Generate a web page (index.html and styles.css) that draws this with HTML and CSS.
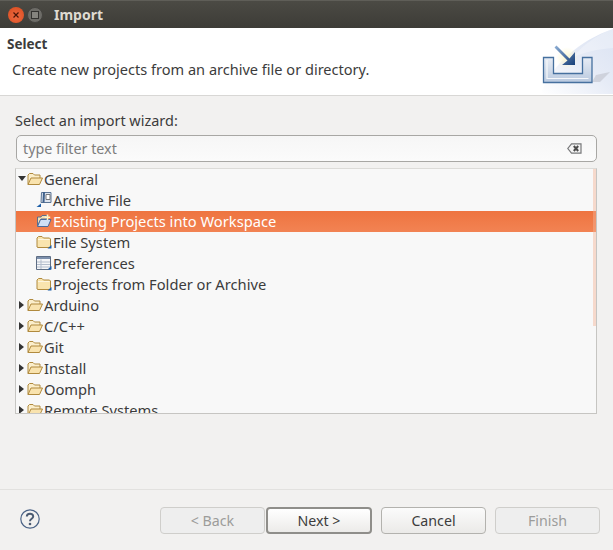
FILE: index.html
```html
<!DOCTYPE html>
<html lang="en">
<head>
  <meta charset="UTF-8" />
  <meta name="viewport" content="width=device-width, initial-scale=1.0" />
  <title>Import</title>
  <link rel="stylesheet" href="styles.css">
</head>
<body>
  <div class="titlebar">
    <span class="win-btn win-close">
      <svg width="8" height="8" viewBox="0 0 8 8"><path d="M1.5 1.5 6.5 6.5M6.5 1.5 1.5 6.5" stroke="#4a1507" stroke-width="1.2"/></svg>
    </span>
    <span class="win-btn win-max"><span class="win-max-box"></span></span>
    <span class="win-title">Import</span>
  </div>

  <div class="banner">
    <div class="banner-text">
      <div class="banner-head">Select</div>
      <div class="banner-desc">Create new projects from an archive file or directory.</div>
    </div>
    <svg class="banner-art" width="113" height="67" viewBox="0 0 113 67">
      <defs>
        <linearGradient id="sky" x1="0" y1="1" x2="1" y2="0">
          <stop offset="0" stop-color="#ffffff"/>
          <stop offset="0.55" stop-color="#e6ebf6"/>
          <stop offset="1" stop-color="#dbe3f3"/>
        </linearGradient>
        <linearGradient id="tray" x1="0" y1="0" x2="0" y2="1">
          <stop offset="0" stop-color="#e8edf5"/>
          <stop offset="1" stop-color="#b9c9df"/>
        </linearGradient>
        <linearGradient id="arrow" x1="0" y1="0" x2="1" y2="1">
          <stop offset="0" stop-color="#8fb0d6"/>
          <stop offset="1" stop-color="#173f78"/>
        </linearGradient>
        <radialGradient id="glow">
          <stop offset="0" stop-color="#fdf7cf"/>
          <stop offset="1" stop-color="#fdf7cf" stop-opacity="0"/>
        </radialGradient>
      </defs>
      <path d="M41 66C50 38 80 12 113 1V66Z" fill="url(#sky)"/>
      <path d="M72 30C84 24 98 21 113 20V1C98 6 84 16 72 30Z" fill="#ffffff" opacity="0.3"/>
      <path d="M92 54H100L110 44 96 47Z" fill="#c4c8d2" opacity="0.7"/>
      <circle cx="67" cy="30" r="11" fill="url(#glow)"/>
      <path d="M43.5 29.5H53.5V45.5H82.5V29.5H92V54.5H43.5Z" fill="url(#tray)" stroke="#46709f" stroke-width="1.3"/>
      <path d="M47 32V50.5H88.5" fill="none" stroke="#f6f8fb" stroke-width="1.2"/>
      <path d="M54.5 19.5 56.5 17.5 69.5 30.5 75 24V37H62L67.5 32.5Z" fill="url(#arrow)"/>
    </svg>
  </div>

  <div class="content">
    <label class="filter-label">Select an import wizard:</label>
    <div class="filter">
      <span class="filter-hint">type filter text</span>
      <svg width="15" height="11" viewBox="0 0 15 11"><path d="M4.5 .8H14V10.2H4.5L.8 5.5Z" fill="#f4f4f4" stroke="#77787a" stroke-width="1.2"/><path d="M6.8 3 11.2 8M11.2 3 6.8 8" stroke="#4c4c4c" stroke-width="2"/></svg>
    </div>

    <div class="tree">
      <div class="row">
        <span class="twist twist-open"></span>
        <svg class="ico" width="16" height="14" viewBox="0 0 16 14"><use href="#open-folder"/></svg>
        <span>General</span>
      </div>
      <div class="row row-child">
        <svg class="ico" width="16" height="17" viewBox="0 0 16 17">
          <path d="M5.5 1.5H15V11.5H5Z" fill="#dde4ee" stroke="#5b7595"/>
          <path d="M8 1 7.5 11.5" stroke="#3f618c" stroke-width="2"/>
          <path d="M10 3.5H14V8.5H10Z" fill="#fff" stroke="#77797c"/>
          <path d="M5 12.5V16H.5Z" fill="#1d5fa8"/>
        </svg>
        <span>Archive File</span>
      </div>
      <div class="row row-child row-selected">
        <svg class="ico" width="16" height="14" viewBox="0 0 16 14">
          <path d="M1.5 12V3H5L6 1.5H11V5H5L1.5 12Z" fill="#f3dfb0" stroke="#5c6d8c"/>
          <path d="M1.5 12.5 4.5 5.5H15L12 12.5Z" fill="#cfdff5" stroke="#4a6a9c"/>
          <path d="M11.5 .5V6M8.8 3.2H14.2" stroke="#fff3c4" stroke-width="1.6"/>
        </svg>
        <span>Existing Projects into Workspace</span>
      </div>
      <div class="row row-child">
        <svg class="ico" width="16" height="14" viewBox="0 0 16 14"><use href="#closed-folder"/></svg>
        <span>File System</span>
      </div>
      <div class="row row-child">
        <svg class="ico" width="16" height="14" viewBox="0 0 16 14">
          <path d="M.5 .5H14.5V13.5H.5Z" fill="#f5f6f8" stroke="#5d6d84"/>
          <path d="M1 1H14V3H1Z" fill="#7d90ac"/>
          <path d="M5 3.5V13M1 6H14M1 8.5H14M1 11H14" stroke="#b3bdcc"/>
          <path d="M15.5 10V13.5H11.5Z" fill="#1d5fa8"/>
        </svg>
        <span>Preferences</span>
      </div>
      <div class="row row-child">
        <svg class="ico" width="16" height="14" viewBox="0 0 16 14"><use href="#closed-folder"/></svg>
        <span>Projects from Folder or Archive</span>
      </div>
      <div class="row">
        <span class="twist"></span>
        <svg class="ico" width="16" height="14" viewBox="0 0 16 14"><use href="#open-folder"/></svg>
        <span>Arduino</span>
      </div>
      <div class="row">
        <span class="twist"></span>
        <svg class="ico" width="16" height="14" viewBox="0 0 16 14"><use href="#open-folder"/></svg>
        <span>C/C++</span>
      </div>
      <div class="row">
        <span class="twist"></span>
        <svg class="ico" width="16" height="14" viewBox="0 0 16 14"><use href="#open-folder"/></svg>
        <span>Git</span>
      </div>
      <div class="row">
        <span class="twist"></span>
        <svg class="ico" width="16" height="14" viewBox="0 0 16 14"><use href="#open-folder"/></svg>
        <span>Install</span>
      </div>
      <div class="row">
        <span class="twist"></span>
        <svg class="ico" width="16" height="14" viewBox="0 0 16 14"><use href="#open-folder"/></svg>
        <span>Oomph</span>
      </div>
      <div class="row">
        <span class="twist"></span>
        <svg class="ico" width="16" height="14" viewBox="0 0 16 14"><use href="#open-folder"/></svg>
        <span>Remote Systems</span>
      </div>
      <div class="scroll-thumb"></div>
    </div>
  </div>

  <div class="footer">
    <svg class="help" width="20" height="20" viewBox="0 0 20 20">
      <circle cx="10" cy="10" r="9.2" fill="none" stroke="#4b6386" stroke-width="1.2"/>
      <path d="M6.8 7.6C6.8 3.8 13.2 3.8 13.2 7.4 13.2 9.8 10 9.6 10 12.2" fill="none" stroke="#4b5b72" stroke-width="2"/>
      <circle cx="10" cy="15" r="1.3" fill="#4b5b72"/>
    </svg>
    <div class="buttons">
      <div class="wizard-nav">
        <button class="btn" disabled>&lt; Back</button>
        <button class="btn btn-default">Next &gt;</button>
      </div>
      <button class="btn">Cancel</button>
      <button class="btn" disabled>Finish</button>
    </div>
  </div>

  <svg class="defs" width="0" height="0">
    <defs>
      <g id="open-folder">
        <path d="M1 12.5V3L2.5 1.5H6L7.5 3H13V6" fill="#fbeecb" stroke="#b08a3e"/>
        <path d="M1 12.5 4 6H15.5L12.5 12.5Z" fill="#f9e3ae" stroke="#b08a3e"/>
      </g>
      <g id="closed-folder">
        <path d="M1 12V3L2.5 1.5H6L7.5 3H13.5L14.5 4V12L13.5 12.5H2Z" fill="#f9e4ae" stroke="#b08a3e"/>
        <path d="M2 4.5H13.5" stroke="#fdf5df"/>
        <path d="M15.5 10V13.5H11.5Z" fill="#1d5fa8"/>
      </g>
    </defs>
  </svg>
</body>
</html>
```

FILE: styles.css
```css
:root {
  --window-bg: #f2f1f0;
  --tree-bg: #f8f8f8;
  --text-color: #3c3c3c;
  --select-top: #ee7440;
  --select-bottom: #f28353;
}

html, body {
  height: 100%;
}

body {
  margin: 0;
  display: flex;
  flex-direction: column;
  overflow: hidden;
  font-family: "Noto Sans", "Open Sans", sans-serif;
  font-size: 14px;
  color: var(--text-color);
  background-color: var(--window-bg);
}

.titlebar {
  height: 28px;
  flex: none;
  display: flex;
  align-items: center;
  padding-left: 8px;
  box-sizing: border-box;
  background: linear-gradient(#4b4a44, #3d3c37);
  border-top: 1px solid #5f5e58;
}
.win-btn {
  width: 16px;
  height: 16px;
  border-radius: 50%;
  margin-right: 3px;
  display: flex;
  align-items: center;
  justify-content: center;
}
.win-close {
  background: radial-gradient(circle at 50% 60%, #ee6a41, #d84a1d);
}
.win-max {
  background: #6d6c67;
  border: 1px solid #44433f;
  box-sizing: border-box;
}
.win-max-box {
  width: 6px;
  height: 6px;
  border: 1px solid #33322f;
  background: #85847e;
}
.win-title {
  margin-left: 8px;
  font-size: 14px;
  font-weight: 700;
  color: #dfdbd2;
}

.banner {
  height: 68px;
  flex: none;
  box-sizing: border-box;
  display: flex;
  justify-content: space-between;
  background-color: #fff;
  border-bottom: 1px solid #d8d7d5;
}
.banner-head {
  margin: 8px 0 0 7px;
  font-size: 13.5px;
  font-weight: 700;
  line-height: 17px;
}
.banner-desc {
  margin: 7px 0 0 12px;
  font-size: 14.55px;
  line-height: 19px;
}
.banner-art {
  flex: none;
}

.content {
  flex: 1;
  display: flex;
  flex-direction: column;
  padding: 16px 16px 0 15px;
  min-height: 0;
}
.filter-label {
  font-size: 14.45px;
  line-height: 18px;
}
.filter {
  height: 27px;
  margin: 5px 0 6px 1px;
  flex: none;
  box-sizing: border-box;
  display: flex;
  align-items: center;
  justify-content: space-between;
  padding: 0 14px 0 6px;
  border: 1px solid #a8a7a4;
  border-radius: 5px;
  background: linear-gradient(#f6f6f6, #fbfbfb);
}
.filter-hint {
  color: #7d7d7d;
  font-size: 14.3px;
}

.tree {
  position: relative;
  height: 246px;
  flex: none;
  box-sizing: border-box;
  font-size: 14.7px;
  background-color: var(--tree-bg);
  border: 1px solid #c6c5c2;
  border-top-color: #dcdbd8;
  overflow: hidden;
}
.row {
  height: 21px;
  box-sizing: border-box;
  display: flex;
  align-items: center;
  white-space: nowrap;
  padding-left: 3px;
  padding-bottom: 2px;
}
.row-child {
  padding-left: 20px;
}
.row-selected {
  color: #fff;
  background: linear-gradient(var(--select-top), var(--select-bottom));
}
.twist {
  width: 0;
  height: 0;
  margin-right: 3px;
  border-top: 4.5px solid transparent;
  border-bottom: 4.5px solid transparent;
  border-left: 5px solid #333;
}
.twist-open {
  margin-left: -1px;
  margin-right: 1px;
  border-left: 4.5px solid transparent;
  border-right: 4.5px solid transparent;
  border-top: 5px solid #333;
  border-bottom: 0;
}
.ico {
  flex: none;
  margin-right: 1px;
}
.scroll-thumb {
  position: absolute;
  top: 0;
  right: 0;
  width: 3px;
  height: 157px;
  background-color: rgba(245, 180, 150, 0.45);
}

.footer {
  margin-top: auto;
  height: 61px;
  flex: none;
  display: flex;
  align-items: flex-start;
  justify-content: space-between;
  padding: 17px 13px 0 20px;
  box-sizing: border-box;
  border-top: 1px solid #e2e1df;
}
.help {
  margin-top: 2px;
}
.buttons {
  display: flex;
  gap: 9px;
}
.wizard-nav {
  display: flex;
  gap: 1px;
}
.btn {
  width: 105px;
  height: 27px;
  padding: 0;
  font-family: inherit;
  font-size: 14.2px;
  color: var(--text-color);
  border: 1px solid #b3b2ae;
  border-radius: 4px;
  background: linear-gradient(#fbfbfb, #ebeae8);
}
.btn:disabled {
  color: #9c9c9a;
  background: #eeeeee;
  border-color: #cfcecb;
}
.btn-default {
  width: 106px;
  border: 2px solid #8f8e8a;
  background: linear-gradient(#ffffff, #ecebe9);
}
.defs {
  position: absolute;
}
```
